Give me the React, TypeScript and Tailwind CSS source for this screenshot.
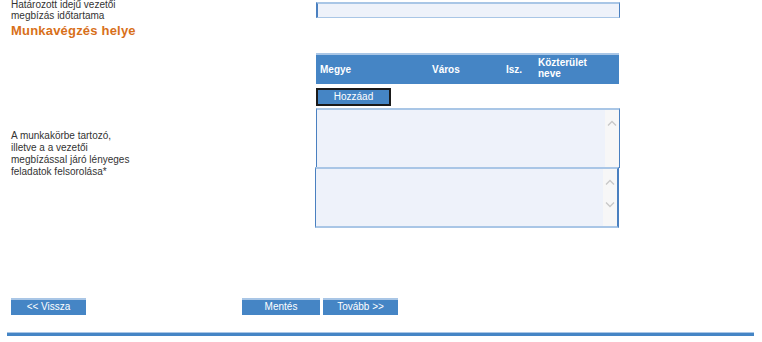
import React from "react";

const label = "text-[10px] leading-[11px] text-[#333]";

function Scroll({ down }: { down?: boolean }) {
  return (
    <div className="w-[14px] h-full bg-[#f7f7f7] flex flex-col items-center pt-[10px]">
      <svg width="10" height="6" viewBox="0 0 10 6" fill="none" stroke="#c8c8c8" strokeWidth="1.3">
        <path d="M1 5.5 L5 1.5 L9 5.5" />
      </svg>
      {down && (
        <svg className="mt-[17px]" width="10" height="6" viewBox="0 0 10 6" fill="none" stroke="#c8c8c8" strokeWidth="1.3">
          <path d="M1 0.5 L5 4.5 L9 0.5" />
        </svg>
      )}
    </div>
  );
}

function Btn({ children, w }: { children: React.ReactNode; w: string }) {
  return (
    <div
      className={`${w} h-[17px] bg-[#4585c5] border-t-2 border-[#a9c6e6] text-white text-[10px] leading-[14px] text-center`}
    >
      {children}
    </div>
  );
}

export default function App() {
  return (
    <div className="w-[762px] h-[342px] bg-white overflow-hidden font-['Liberation_Sans',Arial,sans-serif]">
      <div className="flex -mt-[1px]">
        <div className={`w-[316px] pl-[11px] ${label}`}>
          Határozott idejű vezetői
          <br />
          megbízás időtartama
        </div>
        <div className="w-[304px] h-[16px] mt-[3px] bg-[#eef2fa] border-t-2 border-t-[#a9c6e6] border-l-2 border-l-[#4a80c0] border-r border-r-[#4a80c0] border-b border-b-[#a9c6e6]" />
      </div>
      <div className="pl-[11px] mt-[2px] text-[13px] leading-[16px] font-bold tracking-[0.2px] text-[#d8701a]">
        Munkavégzés helye
      </div>

      <div className="ml-[316px] mt-[14px] w-[303px] h-[31px] bg-[#4585c5] border-t-2 border-[#a9c6e6] flex text-white text-[10px] font-bold leading-[11px]">
        <div className="w-[116px] pl-[4px] pt-[9px]">Megye</div>
        <div className="w-[74px] pt-[9px]">Város</div>
        <div className="w-[32px] pt-[9px]">Isz.</div>
        <div className="pt-[2px]">
          Közterület
          <br />
          neve
        </div>
      </div>

      <div className="ml-[316px] mt-[4px] w-[75px] h-[18px] bg-[#4585c5] border-2 border-[#1a1a1a] text-white text-[10px] leading-[13px] text-center">
        Hozzáad
      </div>

      <div className="flex mt-[2px]">
        <div className="w-[315px] pl-[11px] pt-[22px] text-[10px] leading-[12px] text-[#333]">
          A munkakörbe tartozó,
          <br />
          illetve a a vezetői
          <br />
          megbízással járó lényeges
          <br />
          feladatok felsorolása*
        </div>
        <div className="flex flex-col">
          <div className="ml-[1px] w-[304px] h-[60px] bg-[#eef2fa] border-t-2 border-t-[#a9c6e6] border-x border-x-[#4a80c0] flex justify-end">
            <Scroll />
          </div>
          <div className="-mt-[1px] w-[304px] h-[61px] bg-[#eef2fa] border-t-2 border-t-[#a9c6e6] border-l border-l-[#4a80c0] border-r-2 border-r-[#4a80c0] border-b-2 border-b-[#a9c6e6] flex justify-end">
            <Scroll down />
          </div>
        </div>
      </div>

      <div className="flex mt-[70px]">
        <div className="ml-[11px]">
          <Btn w="w-[75px]">&lt;&lt; Vissza</Btn>
        </div>
        <div className="ml-[156px]">
          <Btn w="w-[78px]">Mentés</Btn>
        </div>
        <div className="ml-[3px]">
          <Btn w="w-[75px]">Tovább &gt;&gt;</Btn>
        </div>
      </div>

      <div className="ml-[7px] mt-[17px] w-[747px] h-[4px] bg-[#4585c5] border-t border-[#a9c6e6]" />
    </div>
  );
}
